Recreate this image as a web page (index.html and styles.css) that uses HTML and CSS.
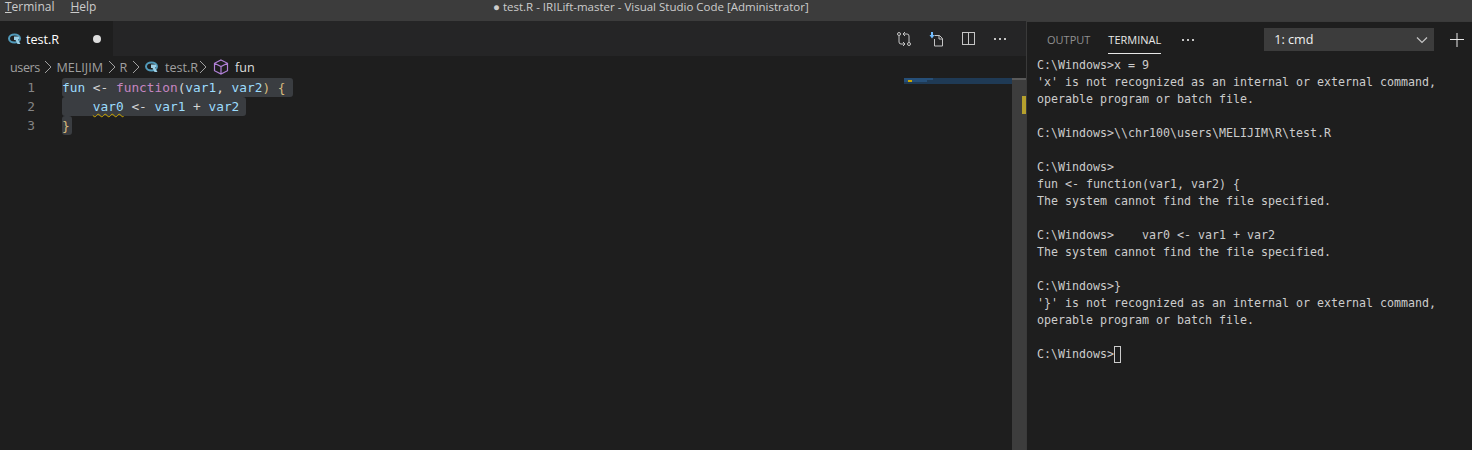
FILE: index.html
```html
<!DOCTYPE html>
<html lang="en">
<head>
<meta charset="utf-8">
<title>test.R - IRILift-master - Visual Studio Code</title>
<link rel="stylesheet" href="styles.css">
</head>
<body>
<header class="titlebar">
  <nav class="menu"><span class="menu-item"><u>T</u>erminal</span><span class="menu-item"><u>H</u>elp</span></nav>
  <div class="window-title">● test.R - IRILift-master - Visual Studio Code [Administrator]</div>
</header>
<main class="workbench">
  <section class="editor">
    <div class="tabbar">
      <div class="tab">
        <svg class="r-icon" viewBox="0 0 14 12" width="14" height="12"><ellipse cx="6.500" cy="5.500" rx="5.500" ry="4" fill="none" stroke="#519aba" stroke-width="2"/><path d="M6 3.500h3.500a1.500 1.500 0 0 1 .5 3.200L12.500 11H9.500L7.500 7H6z" fill="#9cd0e6"/></svg>
        <span class="tab-name">test.R</span>
        <span class="dirty-dot"></span>
      </div>
      <div class="tab-actions">
        <svg viewBox="0 0 16 16" width="16" height="16" fill="none" stroke="#c5c5c5"><circle cx="3" cy="3" r="1.500"/><circle cx="13" cy="13" r="1.500"/><path d="M3 4.500V11a2 2 0 0 0 2 2h4M7 11l2 2-2 2M13 11.500V5a2 2 0 0 0-2-2H7M9 1L7 3l2 2"/></svg>
        <svg viewBox="0 0 16 16" width="16" height="16" fill="none"><path d="M6.500 4.500h5l3 3v7.500h-8V8" stroke="#c5c5c5"/><path d="M11 4.500V8h3.500" stroke="#c5c5c5"/><path d="M4 1v4" stroke="#75beff" stroke-width="2"/><path d="M1.500 4L4 7.500 6.500 4z" fill="#75beff"/></svg>
        <svg viewBox="0 0 16 16" width="16" height="16" fill="none" stroke="#c5c5c5"><rect x="2.500" y="1.500" width="12" height="12"/><path d="M8.500 1.500v12"/></svg>
        <svg viewBox="0 0 16 16" width="16" height="16" fill="#c5c5c5"><rect x="2" y="7" width="2" height="2"/><rect x="7" y="7" width="2" height="2"/><rect x="12" y="7" width="2" height="2"/></svg>
      </div>
    </div>
    <div class="breadcrumbs">
      <span class="crumb-first">users</span>
      <svg class="sep" viewBox="0 0 8 14" width="8" height="14" fill="none" stroke="#a0a0a0"><path d="M1 1l6 6-6 6"/></svg>
      <span>MELIJIM</span>
      <svg class="sep" viewBox="0 0 8 14" width="8" height="14" fill="none" stroke="#a0a0a0"><path d="M1 1l6 6-6 6"/></svg>
      <span>R</span>
      <svg class="sep sep-file" viewBox="0 0 8 14" width="8" height="14" fill="none" stroke="#a0a0a0"><path d="M1 1l6 6-6 6"/></svg>
      <svg class="crumb-icon" viewBox="0 0 14 12" width="14" height="12"><ellipse cx="6.500" cy="5.500" rx="5.500" ry="4" fill="none" stroke="#519aba" stroke-width="2"/><path d="M6 3.500h3.500a1.500 1.500 0 0 1 .5 3.200L12.500 11H9.500L7.500 7H6z" fill="#9cd0e6"/></svg>
      <span>test.R</span>
      <svg class="sep sep-last" viewBox="0 0 8 14" width="8" height="14" fill="none" stroke="#a0a0a0"><path d="M1 1l6 6-6 6"/></svg>
      <svg class="crumb-icon" viewBox="0 0 16 16" width="16" height="16" fill="none" stroke="#b180d7" stroke-width="1.200"><path d="M8 1l6.500 3.300v7.400L8 15l-6.500-3.300V4.300zM1.500 4.300L8 7.600l6.500-3.300M8 7.600V15"/></svg>
      <span class="crumb-active">fun</span>
    </div>
    <div class="code-area">
      <div class="gutter"><div>1</div><div>2</div><div>3</div></div>
      <div class="code">
        <div class="line"><span class="sel sel-1"><span class="id">fun</span> <span class="op">&lt;-</span> <span class="kw">function</span><span class="op">(</span><span class="id">var1</span><span class="op">,</span> <span class="id">var2</span><span class="br">) {</span></span></div>
        <div class="line"><span class="sel sel-2">    <span class="id squiggle">var0</span> <span class="op">&lt;-</span> <span class="id">var1</span> <span class="op">+</span> <span class="id">var2</span></span></div>
        <div class="line"><span class="sel sel-3"><span class="br">}</span></span></div>
      </div>
      <div class="minimap"><div class="mini-sel"><span class="mini-bright"></span><span class="mini-mark"></span></div></div>
      <div class="scrollbar"><div class="scroll-top"></div><span class="scroll-mark"></span></div>
    </div>
  </section>
  <section class="panel">
    <div class="panel-head">
      <span class="panel-tab panel-tab-output">OUTPUT</span>
      <span class="panel-tab panel-tab-active">TERMINAL</span>
      <svg class="panel-more" viewBox="0 0 16 16" width="16" height="16" fill="#c5c5c5"><rect x="2" y="7" width="2" height="2"/><rect x="7" y="7" width="2" height="2"/><rect x="12" y="7" width="2" height="2"/></svg>
      <div class="term-select"><span>1: cmd</span><svg viewBox="0 0 12 8" width="12" height="8" fill="none" stroke="#c5c5c5" stroke-width="1.200"><path d="M1 1.500l5 5 5-5"/></svg></div>
      <svg class="plus" viewBox="0 0 14 14" width="14" height="14" stroke="#e8e8e8"><path d="M7 0v14M0 6.500h14"/></svg>
    </div>
<pre class="terminal">C:\Windows&gt;x = 9
'x' is not recognized as an internal or external command,
operable program or batch file.

C:\Windows&gt;\\chr100\users\MELIJIM\R\test.R

C:\Windows&gt;
fun &lt;- function(var1, var2) {
The system cannot find the file specified.

C:\Windows&gt;    var0 &lt;- var1 + var2
The system cannot find the file specified.

C:\Windows&gt;}
'}' is not recognized as an internal or external command,
operable program or batch file.

C:\Windows&gt;<span class="cursor"></span></pre>
  </section>
</main>
</body>
</html>
```
FILE: styles.css
```css
* { box-sizing: border-box; }
html, body { margin: 0; height: 100%; }
body {
  width: 1472px; height: 450px; overflow: hidden;
  background: #1e1e1e; color: #ccc;
  font-family: "Open Sans", "Noto Sans", sans-serif;
  display: flex; flex-direction: column;
}
.titlebar {
  height: 21px; flex: none; background: #3c3c3c; position: relative;
  display: flex; align-items: flex-start; font-size: 12px;
}
.menu { display: flex; gap: 16px; padding-left: 5px; color: #ccc; }
.menu-item { line-height: 14px; }
.window-title {
  position: absolute; left: 493px; top: 0; line-height: 14px;
  color: #ccc; font-size: 11.500px; white-space: nowrap;
}
.workbench { flex: 1; display: flex; min-height: 0; }
.editor { width: 1026px; display: flex; flex-direction: column; flex: none; }
.tabbar { height: 35px; background: #252526; display: flex; justify-content: space-between; flex: none; }
.tab {
  width: 113px; background: #1e1e1e; display: flex; align-items: center;
  padding: 1px 0 0 8px; font-size: 12.600px; color: #fff;
}
.tab-name { margin-left: 4px; }
.dirty-dot { width: 8px; height: 8px; border-radius: 50%; background: #ddd; margin-left: 34px; }
.tab-actions { display: flex; align-items: center; gap: 16px; padding-right: 18px; }
.breadcrumbs {
  height: 22px; flex: none; display: flex; align-items: center; padding-left: 10px;
  font-size: 12.600px; color: #a0a0a0;
}
.crumb-first { letter-spacing: -0.4px; }
.sep { margin: 0 4px 0 4.500px; flex: none; }
.sep-file { margin-right: 5px; }
.sep-last { margin: 0 6px 0 1px; }
.crumb-icon { flex: none; margin-right: 6px; }
.crumb-active { color: #ddd; }
.code-area { flex: 1; display: flex; min-height: 0; position: relative; }
.gutter {
  width: 62px; flex: none; padding-right: 27px; text-align: right; color: #858585;
  font: 12.800px/19px "DejaVu Sans Mono", monospace;
}
.code { flex: 1; font: 12.800px/19px "DejaVu Sans Mono", monospace; }
.line { height: 19px; white-space: pre; }
.sel { display: inline-block; height: 19px; background: #3a3d41; padding-right: 7px; border-radius: 3px; }
.sel-3 { padding-right: 2px; }
.id { color: #9cdcfe; }
.op { color: #d4d4d4; }
.kw { color: #c586c0; }
.br { color: #d7ba7d; }
.squiggle { text-decoration: underline wavy #cca700 1px; text-underline-offset: 2px; }
.minimap { width: 108px; flex: none; }
.mini-sel { height: 6px; background: #1f3a55; position: relative; }
.mini-bright { position: absolute; left: 0; top: 0; width: 29px; height: 2px; background: #264f78; }
.mini-bright::after { content: ""; position: absolute; left: 0; top: 2px; width: 23px; height: 2px; background: #264f78; }
.mini-mark { position: absolute; left: 4px; top: 2px; width: 4px; height: 2px; background: #cca700; }
.scrollbar { width: 14px; flex: none; background: #3d3d3d; position: relative; }
.scroll-top { height: 2px; background: #5a5a5a; }
.scroll-mark { position: absolute; left: 10px; top: 18px; width: 4px; height: 18px; background: #b5a02d; }
.panel {
  flex: 1; border-left: 1px solid #3a3a3a; border-top: 1px solid #3a3a3a;
  display: flex; flex-direction: column; min-width: 0;
}
.panel-head { height: 34px; flex: none; display: flex; align-items: center; padding: 1px 0 0 20px; font-size: 11px; }
.panel-tab { color: #909090; line-height: 29px; margin-right: 17px; }
.panel-tab-output { margin-right: 18px; }
.panel-tab-active { color: #e7e7e7; box-shadow: inset 0 -1px 0 #e7e7e7; }
.panel-more { margin: 0 68px 0 2px; flex: none; }
.term-select {
  width: 170px; height: 23px; background: #3c3c3c; display: flex; align-items: center;
  justify-content: space-between; padding: 0 6px 0 10px; font-size: 12.600px; color: #f0f0f0;
}
.plus { margin-left: 16px; }
.terminal {
  margin: 0; padding: 1px 0 0 10px; color: #ccc;
  font: 11.630px/17px "DejaVu Sans Mono", monospace;
}
.cursor { display: inline-block; width: 7px; height: 17px; border: 1px solid #ccc; vertical-align: top; }
```
